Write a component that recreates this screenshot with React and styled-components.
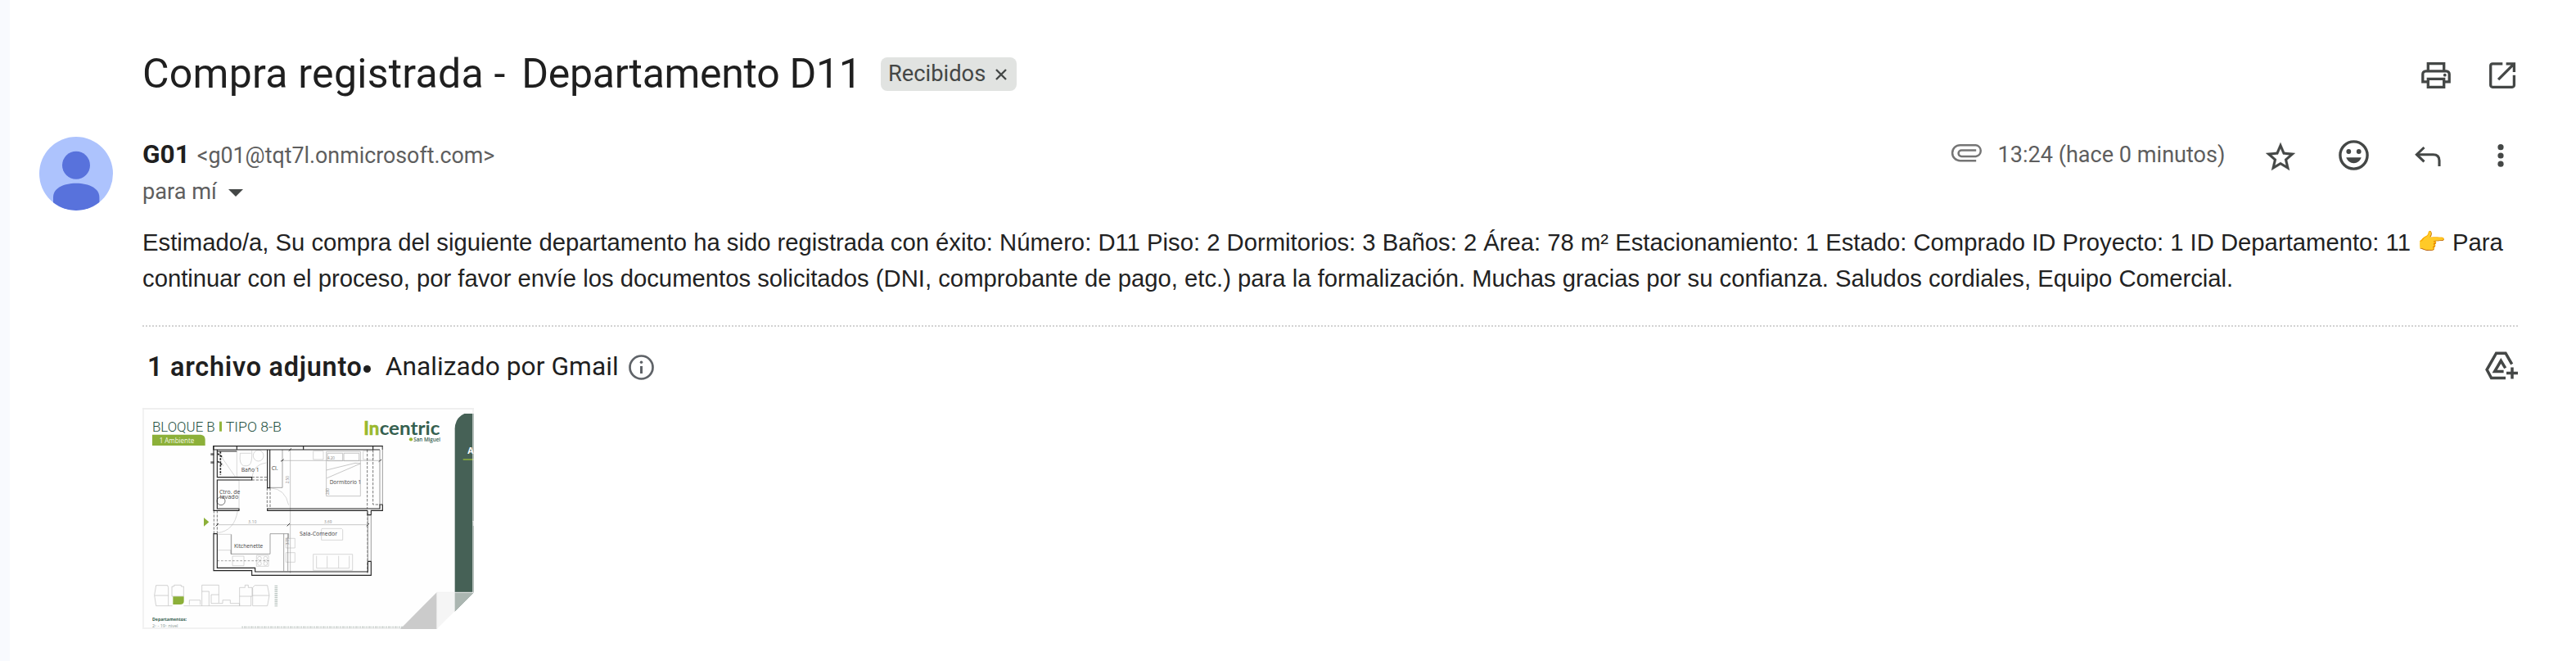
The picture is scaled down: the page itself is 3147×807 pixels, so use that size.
import React from 'react';
import styled, { createGlobalStyle } from 'styled-components';

const GlobalStyle = createGlobalStyle`
  * { box-sizing: border-box; }
  body { margin: 0; background: #fff; }
`;

const Page = styled.div`
  display: flex;
  width: 3147px;
  height: 807px;
  overflow: hidden;
  font-family: Roboto, "Liberation Sans", sans-serif;
  color: #1f1f1f;
  white-space: nowrap;
`;
const Rail = styled.div`
  width: 12px;
  background: #f8fafe;
`;
const Thread = styled.main`
  flex: 1;
  padding: 60px 69px 0 36px;
`;
const SubjectRow = styled.header`
  display: flex;
  align-items: center;
  height: 60px;
  padding-left: 126px;
`;
const Subject = styled.h1`
  margin: 0;
  width: 877px;
  font-size: 50px;
  font-weight: 400;
  line-height: 60px;
  letter-spacing: 0.26px;
`;
const SubjectUnit = styled.span`
  margin-left: 7px;
  letter-spacing: -0.3px;
`;
const Chip = styled.span`
  display: flex;
  align-items: center;
  gap: 12px;
  height: 41px;
  width: 166px;
  margin-left: 25px;
  padding: 0 0 1px 9px;
  border-radius: 8px;
  background: #e1e3e1;
  color: #444746;
  font-size: 27.3px;
  line-height: 40px;
`;
const IconGroup = styled.div`
  display: flex;
  align-items: center;
  gap: ${(p) => p.$gap}px;
  margin-left: auto;
  padding-right: ${(p) => p.$end || 0}px;
`;
const Received = styled.div`
  display: flex;
  align-items: center;
  gap: 18px;
  margin-right: -3.5px;
`;
const Icon = styled.svg`
  display: block;
  flex: none;
  overflow: visible;
  color: ${(p) => p.$color || '#444746'};
  margin: ${(p) => p.$drop || 0}px 0 ${(p) => p.$lift || 0}px ${(p) => p.$before || 0}px;
`;
const Message = styled.article`
  display: flex;
  gap: 36px;
  margin-top: 47px;
`;
const MessageMain = styled.div`
  flex: 1;
`;
const SenderRow = styled.div`
  display: flex;
  align-items: center;
  height: 44px;
`;
const Sender = styled.div`
  display: flex;
  align-items: baseline;
  gap: 9px;
`;
const SenderName = styled.span`
  font-size: 31.6px;
  font-weight: 700;
  line-height: 44px;
`;
const Muted = styled.span`
  color: #5e5e5e;
  font-size: ${(p) => p.$size}px;
  line-height: 44px;
`;
const RecipientRow = styled.div`
  display: flex;
  align-items: center;
  gap: 13px;
  height: 45px;
`;
const Body = styled.div`
  margin-top: 18px;
  height: 88px;
  font-family: "Liberation Sans", Arial, sans-serif;
  font-size: 29.25px;
  line-height: 44px;
  color: #222;
`;
const BodyLine = styled.div`
  height: 44px;
  display: flex;
  white-space: pre;
`;
const Hand = styled.span`
  font-family: "Noto Color Emoji", sans-serif;
  font-size: 28px;
  width: 51px;
  padding-left: 8px;
`;
const Divider = styled.div`
  height: 2px;
  margin-top: 35px;
  background: repeating-linear-gradient(90deg, #d2d2d2 0 2px, transparent 2px 4px);
`;
const AttachmentsHeader = styled.div`
  display: flex;
  align-items: center;
  height: 60px;
  margin-top: 19px;
  padding-left: 6px;
  font-size: 31.7px;
  line-height: 60px;
`;
const Count = styled.span`
  font-size: 32.4px;
  font-weight: 600;
  letter-spacing: 0.75px;
`;
const Dot = styled.span`
  width: 9px;
  height: 9px;
  margin: 4px 18px 0 1px;
  border-radius: 50%;
  background: #1f1f1f;
`;
const Scanned = styled.span`
  margin-right: 12px;
  letter-spacing: 0.05px;
`;
const Attachment = styled.figure`
  width: 405px;
  height: 270px;
  margin: 20px 0 0;
`;

const Avatar = () => (
  <Icon width="90" height="90" viewBox="0 0 90 90">
    <clipPath id="face"><circle cx="45" cy="45" r="45" /></clipPath>
    <g clipPath="url(#face)">
      <rect width="90" height="90" fill="#adc3fd" />
      <circle cx="45" cy="34.7" r="17" fill="#5872dc" />
      <path d="M17 90V74C17 63 29 56.8 45 56.8S73.4 63 73.4 74V90Z" fill="#5872dc" />
    </g>
  </Icon>
);

const PrintIcon = () => (
  <Icon $drop={3} width="36" height="32" viewBox="0 0 36 32" fill="none" stroke="currentColor" strokeWidth="3.3">
    <path d="M8.3 11V1.6H27.7V11" />
    <path d="M8 23.8H1.8V14.5A3.6 3.6 0 0 1 5.4 10.8H30.6A3.6 3.6 0 0 1 34.2 14.5V23.8H28" />
    <path d="M8.3 20.3H27.7V30.4H8.3Z" />
    <circle cx="28.8" cy="15.7" r="1.9" fill="currentColor" stroke="none" />
  </Icon>
);

const OpenIcon = () => (
  <Icon $drop={3} width="32" height="32" viewBox="0 0 32 32" fill="none" stroke="currentColor" strokeWidth="3.3">
    <path d="M16.3 1.8H4A2.3 2.3 0 0 0 1.7 4.1V28A2.3 2.3 0 0 0 4 30.3H28A2.3 2.3 0 0 0 30.4 28V15.7" />
    <path d="M20.6 1.8H30.4V12M29.6 2.6L11.1 21.2" />
  </Icon>
);

const ClipIcon = () => (
  <Icon $color="#757575" $lift={5} width="38" height="22" viewBox="0 0 38 22" fill="none" stroke="currentColor" strokeWidth="2.5">
    <path d="M30.2 20.2H10.6A9.5 9.5 0 0 1 10.6 1.2H29.7A6.9 6.9 0 0 1 29.7 14.9H12.3A3.7 3.7 0 0 1 12.3 7.5H30.2" />
  </Icon>
);

const StarIcon = () => (
  <Icon $drop={3} width="36" height="34" viewBox="2 2 20 19" fill="currentColor" stroke="currentColor" strokeWidth="0.15">
    <path d="M22 9.24l-7.19-.62L12 2 9.19 8.63 2 9.24l5.46 4.73L5.82 21 12 17.27 18.18 21l-1.63-7.03L22 9.24zM12 15.4l-3.76 2.27 1-4.28-3.32-2.88 4.38-.38L12 6.1l1.71 4.04 4.38.38-3.32 2.88 1 4.28L12 15.4z" />
  </Icon>
);

const SmileIcon = () => (
  <Icon width="37" height="37" viewBox="0 0 37 37">
    <circle cx="18.5" cy="18.5" r="16.6" fill="none" stroke="currentColor" strokeWidth="3.4" />
    <circle cx="12.3" cy="14" r="2.9" fill="currentColor" />
    <circle cx="24.7" cy="14" r="2.9" fill="currentColor" />
    <path d="M9.3 21.3H27.7C26.4 25.4 22.8 28.2 18.5 28.2S10.6 25.4 9.3 21.3Z" fill="currentColor" />
  </Icon>
);

const ReplyIcon = () => (
  <Icon $drop={3} $before={3} width="32" height="24" viewBox="0 0 32 24" fill="none" stroke="currentColor" strokeWidth="3.1">
    <path d="M2 9.7H22.5Q30 9.7 30 17V24" />
    <path d="M11.5 1L2.4 9.7L11.5 18.4" />
  </Icon>
);

const MoreIcon = () => (
  <Icon $drop={1} $before={16} width="8" height="28" viewBox="0 0 8 28" fill="currentColor">
    <circle cx="4" cy="3.7" r="3.6" />
    <circle cx="4" cy="14" r="3.6" />
    <circle cx="4" cy="24.2" r="3.6" />
  </Icon>
);

const DriveIcon = () => (
  <Icon $lift={4} width="40" height="35" viewBox="0 0 40 35" fill="none" stroke="currentColor" strokeWidth="3.5">
    <path d="M32.7 15.7L25 2.2H13.6L2.1 22.3L7.6 32.6H25" />
    <path d="M24.7 20.3L19.3 11.5L11.6 24.6H22.6" />
    <path d="M26 26.4H40M33 19.4V33.4" />
  </Icon>
);

const InfoIcon = () => (
  <Icon $color="#5f6368" width="31" height="31" viewBox="0 0 31 31">
    <circle cx="15.5" cy="15.5" r="14" fill="none" stroke="currentColor" strokeWidth="2.7" />
    <path d="M15.5 14V23" stroke="currentColor" strokeWidth="3" />
    <circle cx="15.5" cy="9.3" r="1.8" fill="currentColor" />
  </Icon>
);

const FloorPlan = () => (
  <svg width="405" height="270" viewBox="42 54 1215 810" fontFamily='"Open Sans", sans-serif'>
    <clipPath id="sheet"><path d="M42 54H1257V729L1122 864H42Z" /></clipPath>
    <g clipPath="url(#sheet)">
      <rect x="42" y="54" width="1215" height="810" fill="#fefefe" />

      <g fontFamily='Roboto, sans-serif' fontWeight="300" fontSize="50" fill="#24503f">
        <text x="78" y="140" textLength="230" lengthAdjust="spacingAndGlyphs">BLOQUE B</text>
        <text x="347" y="140" textLength="205" lengthAdjust="spacingAndGlyphs">TIPO 8-B</text>
      </g>
      <rect x="324" y="104" width="9" height="36" fill="#93b53c" />
      <path d="M78 152H256Q272 154 272 170V192H78Z" fill="#8cb039" />
      <text x="104" y="182" fontSize="25" fill="#f4f8e8" textLength="128" lengthAdjust="spacingAndGlyphs">1 Ambiente</text>

      <g fontFamily="Lato, sans-serif" fontWeight="700" fontSize="67">
        <text x="853" y="153" fill="#9ab82d" stroke="#9ab82d" strokeWidth="2" textLength="57" lengthAdjust="spacingAndGlyphs">In</text>
        <text x="911" y="153" fill="#35604f" textLength="221" lengthAdjust="spacingAndGlyphs">centric</text>
      </g>
      <circle cx="1026" cy="169" r="6.5" fill="#9ab82d" />
      <text x="1036" y="176" fontSize="20" fontWeight="600" fill="#35604f" textLength="98" lengthAdjust="spacingAndGlyphs">San Miguel</text>

      <path d="M1187 864V130Q1188 90 1222 75H1257V864Z" fill="#466156" />
      <text x="1234" y="221" fontSize="33" fontWeight="700" fill="#fff" textLength="22" lengthAdjust="spacingAndGlyphs">A</text>
      <path d="M1217 243H1257" stroke="#8fb13c" strokeWidth="4" />
      <path d="M1252 470H1257M1255 470V486" stroke="#dfe6e2" strokeWidth="3" />

      <g fill="none" stroke="#c4c4c4" strokeWidth="2">
        <path d="M318 214L382 306M388 212V306M396 318V420M316 318H396M443 210V230Q443 266 425 266H412Q396 258 400 226V220H440" />
        <ellipse cx="467" cy="229" rx="19" ry="20" />
        <path d="M444 306Q450 260 496 255M510 347Q566 350 578 410M316 512Q380 505 391 430M316 517H366V575M318 575H366M372 597H414V632H372ZM460 594H504V634H460Z" />
        <path d="M568 532H601V567H568ZM568 584H601V619H568Z" />
        <path d="M668 212H705V243H668ZM851 212H888V243H851ZM698 499Q698 496 702 496H772L776 500V538H698Z" />
        <path d="M668 590H812V649H668ZM680 596V641H800V596M719 596V641M761 596V641" />
        <circle cx="471" cy="605" r="7" /><circle cx="493" cy="605" r="7" /><circle cx="471" cy="624" r="7" /><circle cx="493" cy="624" r="7" />
      </g>
      <path d="M584 207V660M548 247H916M316 482H872M716 214H841V377H716ZM720 220H776V248H720ZM780 220H836V248H780ZM716 282L822 256L841 258L718 311" fill="none" stroke="#aaa" strokeWidth="2" />
      <g fill="none" stroke="#777" strokeWidth="2">
        <path d="M510 346H555V207M366 575V589H510V515H578V530M560 515V652M575 515V652M368 517V589" />
        <path d="M316 614H510" strokeDasharray="8 6" />
        <circle cx="330" cy="395" r="15" stroke="#333" />
        <path d="M318 222L338 236M318 250L338 264M328 214V300" stroke="#222" strokeWidth="5" strokeDasharray="7 5" />
        <path d="M292 224H304M292 254H304" stroke="#777" strokeWidth="8" />
      </g>
      <g fill="none" stroke="#555" strokeWidth="2.4">
        <path d="M866 207V423M867 440V664M887 207V408H912M304 430V515M316 430V515M499 347V423M510 347V423M443 308H500M443 318H500" strokeDasharray="10 5" />
        <path d="M550 250L560 242M311 487L321 477M572 487L582 477M908 251L918 243M863 487L873 477M578 212L588 202" stroke="#111" />
      </g>
      <g fill="none" stroke="#222" strokeWidth="3.4">
        <path d="M922 207V194H302V207H912M388 194V207M632 194V207M887 194V207" />
        <path d="M303 194V430H396V423H316V318H443V308H316V207M316 213H388" />
        <path d="M500 207V347H509V207M867 430H500V423H912V408H922V430H880V446H867V430" />
        <path d="M316 515H303V650H443V667H880V616H868V654H455V640H316V515" />
      </g>
      <path d="M912 207V408M922 194V408M868 446V616M880 446V616" stroke="#888" strokeWidth="2.5" />

      <path d="M267 456L286 472L267 488Z" fill="#8cb039" />

      <g fill="#444" fontSize="19">
        <text x="404" y="289" textLength="66" lengthAdjust="spacingAndGlyphs">Baño 1</text>
        <text x="515" y="281" textLength="24" lengthAdjust="spacingAndGlyphs">Cl.</text>
        <text x="324" y="369" textLength="76" lengthAdjust="spacingAndGlyphs">Ctro. de</text>
        <text x="326" y="386" textLength="68" lengthAdjust="spacingAndGlyphs">lavado</text>
        <text x="378" y="566" textLength="106" lengthAdjust="spacingAndGlyphs">Kitchenette</text>
        <text x="618" y="522" textLength="138" lengthAdjust="spacingAndGlyphs">Sala-Comedor</text>
        <text x="728" y="332" textLength="116" lengthAdjust="spacingAndGlyphs">Dormitorio 1</text>
      </g>
      <g fill="#888" fontSize="14">
        <text x="430" y="477" textLength="30">3.10</text>
        <text x="708" y="476" textLength="28">3.69</text>
        <text x="720" y="243" textLength="27">4.20</text>
        <text transform="translate(579 331) rotate(-90)" textLength="28">2.50</text>
        <text transform="translate(579 556) rotate(-90)" textLength="28">3.05</text>
        <text transform="translate(725 372) rotate(-90)" textLength="24">2.80</text>
      </g>

      <g fill="none" stroke="#bdbdbd" strokeWidth="2">
        <path d="M92 704H134L137 712V779H92L86 740ZM87 741H137M150 708H158V703H184V708H193V744H150ZM137 779H152M193 779H398V770H364V758H336V770H323" />
        <path d="M260 703H322V770H294V738H322M260 703V779M260 726H286V779M398 712H418V703H430V712H444V744H398ZM398 744V779H440V744M446 712L454 704H500L507 741L500 779H446ZM446 741H507M214 775V758H254V775" />
      </g>
      <path d="M154 745H194V762Q194 774 180 774H154Z" fill="#8cb039" />
      <path d="M532 704V782" stroke="#bcc6c2" strokeWidth="11" strokeDasharray="4 3" />
      <text x="78" y="834" fontSize="16" fontWeight="700" fill="#35604f" textLength="126" lengthAdjust="spacingAndGlyphs">Departamentos:</text>
      <text x="78" y="858" fontSize="14" fill="#8a9a94" textLength="94" lengthAdjust="spacingAndGlyphs">2º - 19º nivel</text>
      <path d="M406 859H1120" stroke="#c4ccc8" strokeWidth="9" strokeDasharray="5 3 8 2 3 3" />

      <path d="M42 57H1257" stroke="#efefef" strokeWidth="6" />
      <path d="M45 54V864M42 861H990" stroke="#eee" strokeOpacity=".75" strokeWidth="6" />
      <path d="M1254 60V732" stroke="#eee" strokeOpacity=".65" strokeWidth="6" />
      <path d="M1121 729V864H987Z" fill="#cbcbcb" />
      <path d="M1121 729H1257L1121 864Z" fill="#eee" fillOpacity=".6" />
      <path d="M1122 729V864M1121 730H1257" stroke="#f1f1f1" strokeOpacity=".7" strokeWidth="4" />
    </g>
  </svg>
);

export default function App() {
  return (
    <>
      <GlobalStyle />
      <Page>
        <Rail />
        <Thread>
          <SubjectRow>
            <Subject>
              Compra registrada - <SubjectUnit>Departamento D11</SubjectUnit>
            </Subject>
            <Chip>
              Recibidos
              <Icon $drop={2} width="14" height="14" viewBox="0 0 14 14" stroke="currentColor" strokeWidth="2.4">
                <path d="M1 1L13 13M13 1L1 13" />
              </Icon>
            </Chip>
            <IconGroup $gap={47} $end={5}>
              <PrintIcon />
              <OpenIcon />
            </IconGroup>
          </SubjectRow>

          <Message>
            <Avatar />
            <MessageMain>
              <SenderRow>
                <Sender>
                  <SenderName>G01</SenderName>
                  <Muted $size={26.8}>&lt;g01@tqt7l.onmicrosoft.com&gt;</Muted>
                </Sender>
                <IconGroup $gap={53} $end={19}>
                  <Received>
                    <ClipIcon />
                    <Muted $size={27.1}>13:24 (hace 0 minutos)</Muted>
                  </Received>
                  <StarIcon />
                  <SmileIcon />
                  <ReplyIcon />
                  <MoreIcon />
                </IconGroup>
              </SenderRow>
              <RecipientRow>
                <Muted $size={27.2}>para mí</Muted>
                <Icon $drop={3} $before={1} width="18" height="9" viewBox="0 0 18 9" fill="currentColor">
                  <path d="M0 0H18L9 9Z" />
                </Icon>
              </RecipientRow>

              <Body>
                <BodyLine>
                  Estimado/a, Su compra del siguiente departamento ha sido registrada con éxito: Número: D11 Piso: 2 Dormitorios: 3 Baños: 2 Área: 78 m² Estacionamiento: 1 Estado: Comprado ID Proyecto: 1 ID Departamento: 11
                  <Hand>👉</Hand>
                  Para
                </BodyLine>
                <BodyLine>
                  continuar con el proceso, por favor envíe los documentos solicitados (DNI, comprobante de pago, etc.) para la formalización. Muchas gracias por su confianza. Saludos cordiales, Equipo Comercial.
                </BodyLine>
              </Body>

              <Divider />
              <AttachmentsHeader>
                <Count>1 archivo adjunto</Count>
                <Dot />
                <Scanned>Analizado por Gmail</Scanned>
                <InfoIcon />
                <IconGroup $gap={0} $end={2}>
                  <DriveIcon />
                </IconGroup>
              </AttachmentsHeader>
              <Attachment>
                <FloorPlan />
              </Attachment>
            </MessageMain>
          </Message>
        </Thread>
      </Page>
    </>
  );
}
